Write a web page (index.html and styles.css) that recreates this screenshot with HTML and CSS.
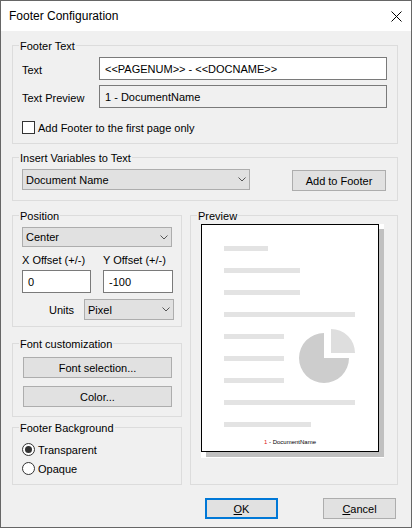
FILE: index.html
```html
<!DOCTYPE html>
<html lang="en">
<head>
    <meta charset="UTF-8">
    <title>Footer Configuration</title>
    <link rel="stylesheet" href="styles.css">
</head>
<body>
    <div class="dialog">
        <!-- title bar -->
        <div class="titlebar">
            <span class="title">Footer Configuration</span>
            <svg class="close-icon" width="11" height="11" viewBox="0 0 11 11">
                <path d="M0.5 0.5 L10.5 10.5 M10.5 0.5 L0.5 10.5" stroke="#000" stroke-width="1" fill="none"/>
            </svg>
        </div>

        <div class="content">
            <!-- footer text -->
            <div class="group group-text">
                <span class="legend">Footer Text</span>
                <div class="field-row">
                    <span class="field-label">Text</span>
                    <div class="textbox textbox-wide">&lt;&lt;PAGENUM&gt;&gt; - &lt;&lt;DOCNAME&gt;&gt;</div>
                </div>
                <div class="field-row">
                    <span class="field-label">Text Preview</span>
                    <div class="textbox textbox-wide readonly">1 - DocumentName</div>
                </div>
                <div class="check-row">
                    <span class="checkbox"></span>
                    <span>Add Footer to the first page only</span>
                </div>
            </div>

            <!-- variables -->
            <div class="group group-vars">
                <span class="legend">Insert Variables to Text</span>
                <div class="combo combo-vars">
                    <span>Document Name</span>
                    <svg class="chevron" width="8" height="5" viewBox="0 0 8 5"><polyline points="0.5,0.5 4,4 7.5,0.5" fill="none" stroke="#555" stroke-width="1"/></svg>
                </div>
                <button class="btn btn-add">Add to Footer</button>
            </div>

            <div class="columns">
                <div class="left-col">
                    <!-- position -->
                    <div class="group group-position">
                        <span class="legend">Position</span>
                        <div class="combo combo-position">
                            <span>Center</span>
                            <svg class="chevron" width="8" height="5" viewBox="0 0 8 5"><polyline points="0.5,0.5 4,4 7.5,0.5" fill="none" stroke="#555" stroke-width="1"/></svg>
                        </div>
                        <div class="offset-grid offset-labels">
                            <span>X Offset (+/-)</span>
                            <span>Y Offset (+/-)</span>
                        </div>
                        <div class="offset-grid offset-inputs">
                            <div class="textbox">0</div>
                            <div class="textbox">-100</div>
                        </div>
                        <div class="units-row">
                            <span>Units</span>
                            <div class="combo combo-units">
                                <span>Pixel</span>
                                <svg class="chevron" width="8" height="5" viewBox="0 0 8 5"><polyline points="0.5,0.5 4,4 7.5,0.5" fill="none" stroke="#555" stroke-width="1"/></svg>
                            </div>
                        </div>
                    </div>

                    <!-- font -->
                    <div class="group group-font">
                        <span class="legend">Font customization</span>
                        <button class="btn btn-wide">Font selection...</button>
                        <button class="btn btn-wide">Color...</button>
                    </div>

                    <!-- background -->
                    <div class="group group-bg">
                        <span class="legend">Footer Background</span>
                        <div class="radio-row"><span class="radio checked"></span><span>Transparent</span></div>
                        <div class="radio-row"><span class="radio"></span><span>Opaque</span></div>
                    </div>
                </div>

                <!-- preview -->
                <div class="group group-preview">
                    <span class="legend">Preview</span>
                    <div class="sheet">
                        <div class="page">
                            <div class="lines">
                                <div class="line line-xs"></div>
                                <div class="line line-md"></div>
                                <div class="line line-md"></div>
                                <div class="line line-full"></div>
                                <div class="line line-sm"></div>
                                <div class="line line-sm"></div>
                                <div class="line line-sm"></div>
                                <div class="line line-full"></div>
                                <div class="line line-lg"></div>
                            </div>
                            <svg class="pie" width="57" height="56" viewBox="0 0 57 56">
                                <path d="M25 30 L25 5 A25 25 0 1 0 50 30 Z" fill="#cdcdcd"/>
                                <path d="M32 25 L32 1 A24 24 0 0 1 56 25 Z" fill="#dedede"/>
                            </svg>
                            <div class="page-footer"><span class="page-num">1</span> - DocumentName</div>
                        </div>
                    </div>
                </div>
            </div>

            <div class="actions">
                <button class="btn btn-action btn-default"><u>O</u>K</button>
                <button class="btn btn-action"><u>C</u>ancel</button>
            </div>
        </div>
    </div>
</body>
</html>
```

FILE: styles.css
```css
* {
    margin: 0;
    padding: 0;
    box-sizing: border-box;
}

body {
    background-color: #f0f0f0;
    color: #000000;
    font-family: "Liberation Sans", Arial, sans-serif;
    font-size: 11px;
    line-height: 14px;
}

.dialog {
    width: 412px;
    height: 528px;
    border: 1px solid #666666;
    background-color: #f0f0f0;
    display: flex;
    flex-direction: column;
}

/* title bar */
.titlebar {
    height: 30px;
    background-color: #ffffff;
    display: flex;
    align-items: center;
    justify-content: space-between;
    padding: 0 9px 0 8px;
}

.title {
    font-size: 12px;
}

.close-icon {
    display: block;
}

.content {
    flex: 1;
    display: flex;
    flex-direction: column;
    padding: 14px 13px 0 11px;
}

/* group boxes */
.group {
    position: relative;
    border: 1px solid #dcdcdc;
}

.legend {
    position: absolute;
    top: -7px;
    left: 6px;
    padding: 0 1px;
    background-color: #f0f0f0;
    white-space: nowrap;
}

.group-text {
    height: 99px;
    padding: 11px 10px 0 9px;
}

.field-row {
    display: flex;
    align-items: center;
    height: 23px;
}

.field-row + .field-row {
    margin-top: 5px;
}

.field-label {
    width: 77px;
    padding-top: 3px;
}

.textbox {
    height: 23px;
    border: 1px solid #7a7a7a;
    background-color: #ffffff;
    padding: 0 5px;
    display: flex;
    align-items: center;
    white-space: nowrap;
}

.textbox-wide {
    width: 288px;
}

.textbox.readonly {
    background-color: #f0f0f0;
}

.check-row {
    display: flex;
    align-items: center;
    gap: 3px;
    height: 13px;
    margin-top: 13px;
}

.checkbox {
    width: 13px;
    height: 13px;
    border: 1px solid #333333;
    background-color: #ffffff;
}

/* combo boxes and buttons */
.combo {
    height: 21px;
    border: 1px solid #adadad;
    background-color: #e1e1e1;
    display: flex;
    align-items: center;
    justify-content: space-between;
    padding: 0 3px;
}

.chevron {
    display: block;
}

.btn {
    height: 21px;
    border: 1px solid #adadad;
    background-color: #e1e1e1;
    font: inherit;
    color: #000000;
    display: flex;
    align-items: center;
    justify-content: center;
}

.group-vars {
    height: 44px;
    margin-top: 13px;
    padding: 11px 11px 0 9px;
    display: flex;
    justify-content: space-between;
    align-items: flex-start;
}

.combo-vars {
    width: 228px;
}

.btn-add {
    width: 94px;
    margin-top: 1px;
}

/* lower area */
.columns {
    display: flex;
    gap: 8px;
    margin-top: 14px;
}

.left-col {
    width: 170px;
    display: flex;
    flex-direction: column;
}

.group-position {
    height: 112px;
    padding: 11px 7px 0 9px;
}

.combo-position {
    width: 150px;
    height: 20px;
}

.offset-grid {
    display: grid;
    grid-template-columns: 69px 70px;
    column-gap: 12px;
}

.offset-labels {
    margin-top: 6px;
    white-space: nowrap;
}

.offset-inputs {
    margin-top: 3px;
}

.units-row {
    display: flex;
    justify-content: flex-end;
    align-items: center;
    gap: 10px;
    margin-top: 6px;
}

.combo-units {
    width: 90px;
}

.group-font {
    height: 74px;
    margin-top: 16px;
    padding: 13px 0 0 10px;
    display: flex;
    flex-direction: column;
    gap: 8px;
}

.btn-wide {
    width: 149px;
}

.group-bg {
    height: 58px;
    margin-top: 10px;
    padding: 12px 0 0 9px;
}

.radio-row {
    display: flex;
    align-items: center;
    gap: 3px;
    height: 19px;
}

.radio {
    width: 13px;
    height: 13px;
    border: 1px solid #333333;
    border-radius: 50%;
    background-color: #ffffff;
    display: flex;
    align-items: center;
    justify-content: center;
}

.radio.checked::after {
    content: "";
    width: 7px;
    height: 7px;
    border-radius: 50%;
    background-color: #333333;
}

/* preview */
.group-preview {
    width: 208px;
    height: 270px;
    padding: 8px 0 0 10px;
}

.sheet {
    width: 183px;
    height: 234px;
    background-color: #ffffff;
}

.page {
    position: relative;
    width: 178px;
    height: 228px;
    border: 1px solid #000000;
    background-color: #ffffff;
    box-shadow: 5px 5px 0 #c0c0c0;
    padding: 21px 0 5px 0;
    display: flex;
    flex-direction: column;
}

.lines {
    display: flex;
    flex-direction: column;
    gap: 17px;
    padding-left: 22px;
}

.line {
    height: 5px;
    background-color: #e3e3e3;
}

.line-xs { width: 44px; }
.line-sm { width: 60px; }
.line-md { width: 76px; }
.line-lg { width: 87px; }
.line-full { width: 131px; }

.pie {
    position: absolute;
    left: 97px;
    top: 103px;
}

.page-footer {
    margin-top: auto;
    text-align: center;
    font-size: 6px;
    line-height: 7px;
}

.page-num {
    color: #e02020;
}

/* dialog buttons */
.actions {
    display: flex;
    justify-content: flex-end;
    gap: 45px;
    margin-top: 13px;
    padding-right: 2px;
}

.btn-action {
    width: 73px;
}

.btn-default {
    border: 2px solid #0078d7;
}
```
